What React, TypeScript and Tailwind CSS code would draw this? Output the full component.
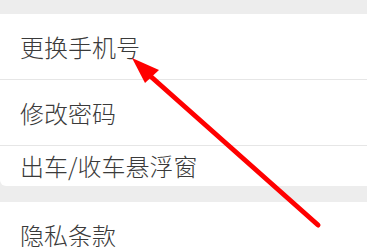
import React from 'react';

const rows = ['更换手机号', '修改密码'];

const Row: React.FC<{ label: string; className?: string }> = ({ label, className }) => (
  <div className={`flex items-center bg-white pl-5 text-[24px] font-light text-[#3a3a3a] ${className ?? ''}`}>
    <span className="leading-none">{label}</span>
  </div>
);

export default function App() {
  return (
    <div
      className="relative h-[247px] w-[367px] overflow-hidden bg-[#ededed]"
      style={{ fontFamily: '"Noto Sans CJK SC", "Noto Sans", sans-serif' }}
    >
      <div className="h-[14px]" />
      {rows.map((r) => (
        <Row key={r} label={r} className="h-[66px] border-b border-[#e6e6e6]" />
      ))}
      <Row label="出车/收车悬浮窗" className="h-[40px] rounded-bl-md" />
      <div className="h-[16px]" />
      <Row label="隐私条款" className="h-[65px]" />

      {/* red annotation arrow */}
      <svg className="pointer-events-none absolute inset-0" width="367" height="247" viewBox="0 0 367 247">
        <line x1="318" y1="225" x2="148" y2="74" stroke="#ff0000" strokeWidth="5" strokeLinecap="round" />
        <polygon points="132,58 159,70 145,83" fill="#ff0000" />
      </svg>
    </div>
  );
}
